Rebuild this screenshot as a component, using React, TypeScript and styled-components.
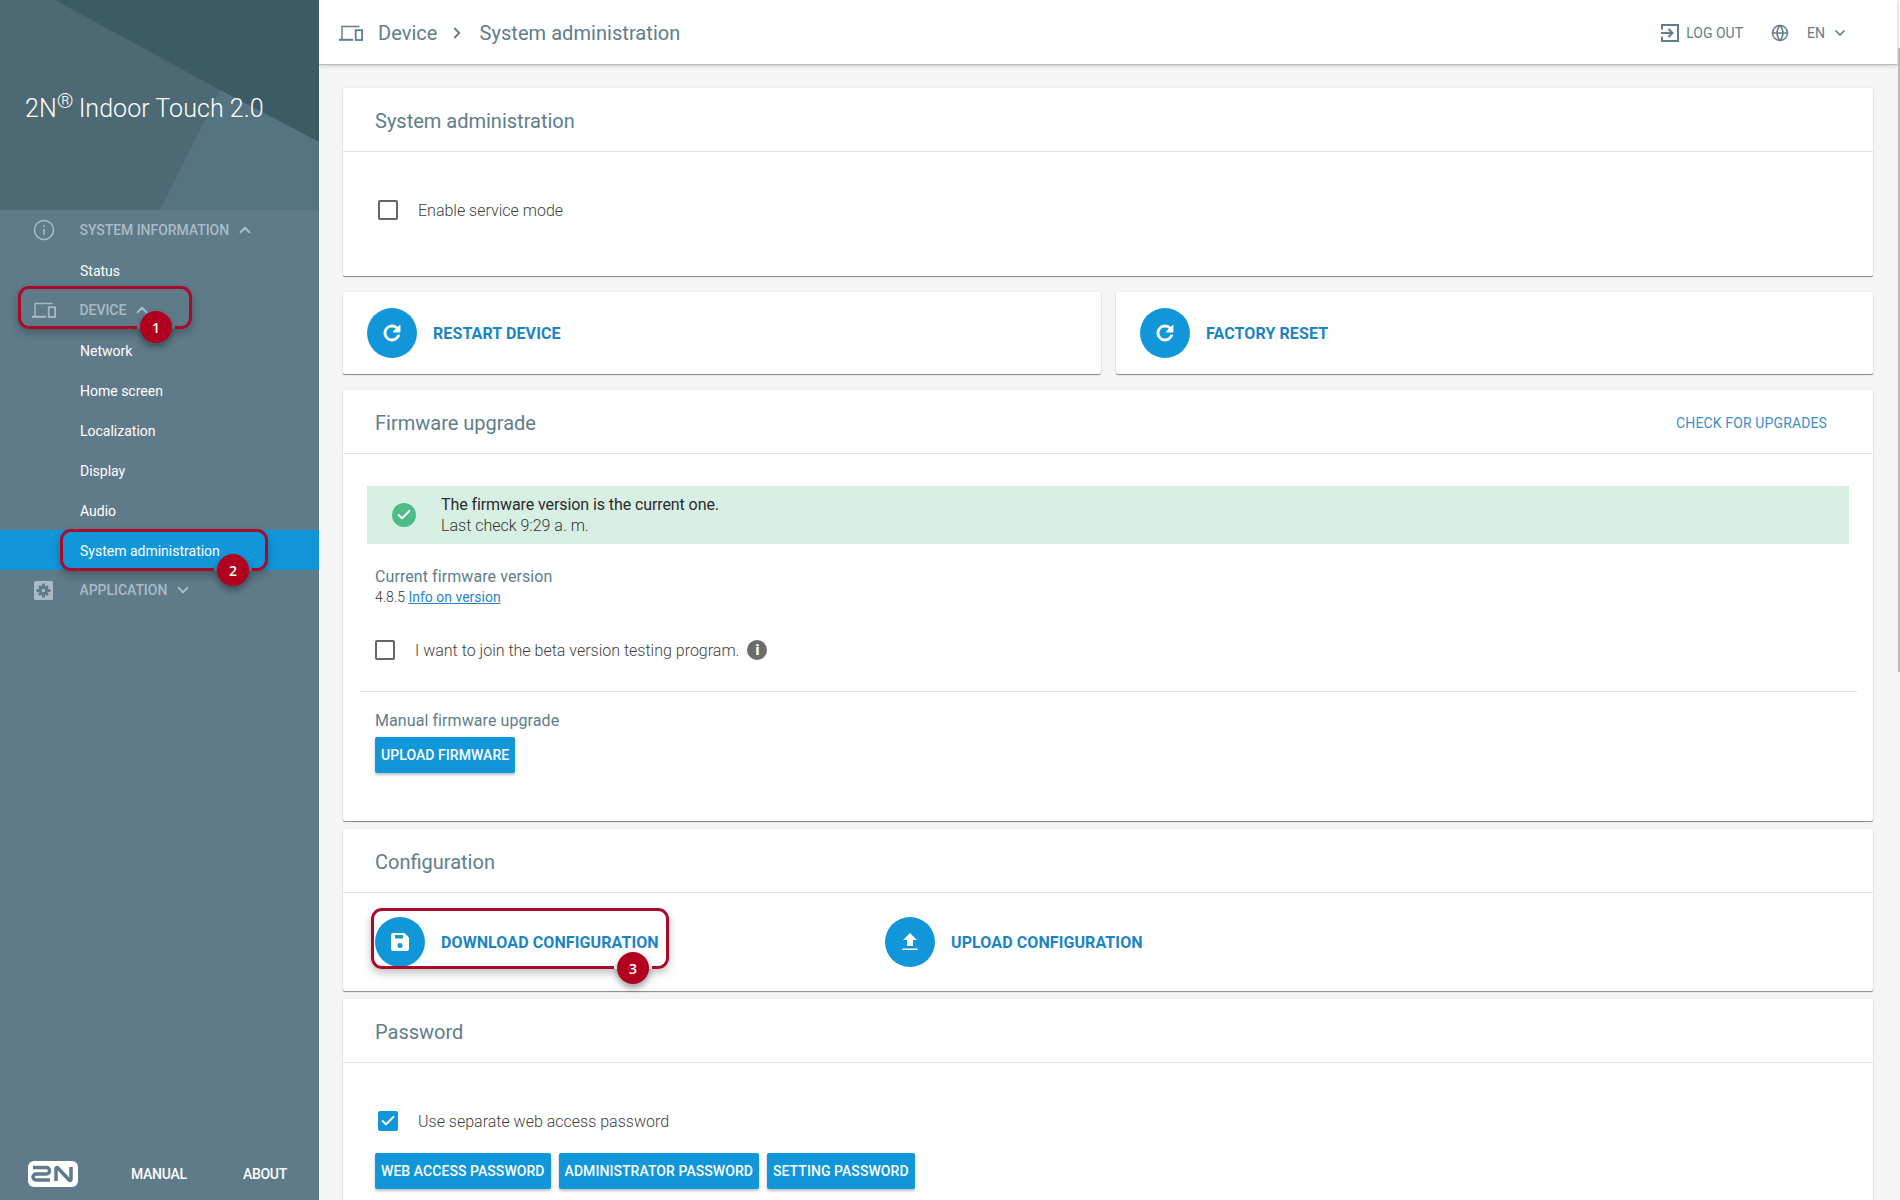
import React from "react";
import styled, { createGlobalStyle } from "styled-components";
import { Globe, ChevronUp, ChevronDown, ChevronRight, Check } from "lucide-react";

const Global = createGlobalStyle`
  html, body { margin: 0; padding: 0; background: #f5f5f5; }
  body { font-family: Roboto, "Liberation Sans", sans-serif; overflow: hidden; }
  * { box-sizing: border-box; }
`;

const Shell = styled.div`
  position: relative;
  display: flex;
  width: 1900px;
  height: 1200px;
  overflow: hidden;
  background: #f5f5f5;
`;

const Sidebar = styled.aside`
  width: 319px;
  flex: none;
  display: flex;
  flex-direction: column;
  background: #5f7a89;
`;

const Brand = styled.div`
  position: relative;
  height: 210px;
  flex: none;
  display: flex;
  align-items: flex-start;
  padding: 89px 0 0 25px;
  background: #4c6974;
  overflow: hidden;
`;

const BrandArt = styled.svg`
  position: absolute;
  inset: 0;
`;

const BrandTitle = styled.h1`
  position: relative;
  margin: 0;
  font-size: 25px;
  line-height: 40px;
  font-weight: 300;
  color: #fff;
  white-space: nowrap;
  letter-spacing: 0.05px;
  sup { font-size: 21px; line-height: 0; vertical-align: 9px; margin-right: 5px; }
`;

const Nav = styled.nav`
  display: flex;
  flex-direction: column;
`;

const Section = styled.div`
  height: 40px;
  display: flex;
  align-items: center;
  color: #a8bcc7;
  font-size: 14px;
  font-weight: 500;
  letter-spacing: -0.05px;
  text-transform: uppercase;
`;

const SectionIcon = styled.span`
  width: 79.5px;
  flex: none;
  display: flex;
  justify-content: center;
  padding-left: 8px;
`;

const SectionCaret = styled.span`
  display: flex;
  margin-left: 7px;
`;

const NavItem = styled.a<{ $active?: boolean }>`
  height: 40px;
  display: flex;
  align-items: center;
  padding: 1px 0 0 80px;
  font-size: 14px;
  font-weight: 400;
  color: #fff;
  background: ${(p) => (p.$active ? "#1296da" : "transparent")};
`;

const SideFooter = styled.div`
  margin-top: auto;
  height: 36px;
  margin-bottom: 8px;
  display: flex;
  align-items: center;
  padding-left: 28px;
`;

const FooterLink = styled.a<{ $w: number }>`
  width: ${(p) => p.$w}px;
  font-size: 14px;
  font-weight: 500;
  color: #fff;
  letter-spacing: -0.3px;
`;

const Logo = styled.svg`
  margin-right: 53px;
`;

const Main = styled.main`
  flex: 1;
  min-width: 0;
  display: flex;
  flex-direction: column;
`;

const TopBar = styled.header`
  height: 65px;
  flex: none;
  margin-right: 3px;
  display: flex;
  align-items: center;
  padding: 1px 49px 0 20px;
  background: #fff;
  border-bottom: 1px solid #bbb;
  box-shadow: 0 1px 3px rgba(0, 0, 0, 0.18);
  color: #607d8b;
`;

const Crumb = styled.span<{ $ml?: number }>`
  font-size: 20px;
  font-weight: 400;
  letter-spacing: 0.05px;
  color: #607d8b;
  margin-left: ${(p) => p.$ml ?? 0}px;
`;

const CrumbSep = styled.span`
  display: flex;
  margin: 0 14px 0 10px;
  color: #607d8b;
`;

const TopRight = styled.div`
  margin-left: auto;
  display: flex;
  align-items: center;
`;

const TopText = styled.span<{ $ml?: number }>`
  font-size: 14px;
  font-weight: 400;
  color: #607d8b;
  margin-left: ${(p) => p.$ml ?? 0}px;
`;

const GlobeIcon = styled(Globe)`
  margin-left: 28px;
`;

const EnCaret = styled(ChevronDown)`
  margin-left: 7px;
`;

const Content = styled.div`
  flex: 1;
  min-height: 0;
  padding: 23px 27px 0 24px;
  display: flex;
  flex-direction: column;
`;

const Card = styled.section<{ $after?: number }>`
  flex: none;
  background: #fff;
  border-radius: 2px;
  box-shadow: 0 1px 1px rgba(0, 0, 0, 0.45), 0 0 2px rgba(0, 0, 0, 0.08);
  margin-bottom: ${(p) => p.$after ?? 8}px;
`;

const CardHead = styled.div`
  height: 64px;
  display: flex;
  align-items: center;
  justify-content: space-between;
  padding: 2px 46px 0 32px;
  border-bottom: 1px solid #e3e3e3;
`;

const CardTitle = styled.h2`
  margin: 0;
  font-size: 20px;
  font-weight: 400;
  color: #607d8b;
`;

const HeadLink = styled.a`
  font-size: 14px;
  font-weight: 400;
  letter-spacing: 0.13px;
  color: #3d8fc9;
`;

const CheckRow = styled.label<{ $pad: number; $gap: number; $top: number; $bottom: number }>`
  display: flex;
  align-items: center;
  padding-left: ${(p) => p.$pad}px;
  gap: ${(p) => p.$gap}px;
  margin-top: ${(p) => p.$top}px;
  margin-bottom: ${(p) => p.$bottom}px;
  height: 20px;
`;

const Box = styled.span<{ $on?: boolean }>`
  width: 20px;
  height: 20px;
  flex: none;
  border-radius: 2px;
  display: flex;
  align-items: center;
  justify-content: center;
  border: 2px solid ${(p) => (p.$on ? "#1296da" : "#666")};
  background: ${(p) => (p.$on ? "#1296da" : "#fff")};
`;

const CheckText = styled.span`
  font-size: 16px;
  font-weight: 300;
  color: #3f3f3f;
`;

const ActionRow = styled.div`
  display: grid;
  grid-template-columns: 758px 757px;
  gap: 15px;
  margin-bottom: 16px;
`;

const ActionCard = styled.div`
  height: 82px;
  display: flex;
  align-items: center;
  padding-left: 24px;
  background: #fff;
  border-radius: 2px;
  box-shadow: 0 1px 1px rgba(0, 0, 0, 0.45), 0 0 2px rgba(0, 0, 0, 0.08);
`;

const Action = styled.a`
  display: flex;
  align-items: center;
  gap: 16px;
`;

const Round = styled.span`
  width: 50px;
  height: 50px;
  flex: none;
  border-radius: 50%;
  background: #1296da;
  display: flex;
  align-items: center;
  justify-content: center;
`;

const ActionText = styled.span`
  font-size: 16px;
  font-weight: 700;
  letter-spacing: 0.1px;
  color: #1b84c4;
`;

const Alert = styled.div`
  margin: 32px 24px 0;
  height: 58px;
  display: flex;
  align-items: center;
  background: #d7f0e3;
  padding-left: 25px;
  gap: 25px;
`;

const AlertIcon = styled.span`
  width: 24px;
  height: 24px;
  flex: none;
  border-radius: 50%;
  background: #4fbb87;
  display: flex;
  align-items: center;
  justify-content: center;
`;

const AlertLines = styled.div`
  display: flex;
  flex-direction: column;
  font-size: 16px;
  line-height: 21px;
`;

const AlertMain = styled.span`
  font-weight: 400;
  letter-spacing: -0.09px;
  color: #2b2b2b;
`;

const AlertSub = styled.span`
  font-weight: 300;
  color: #333;
`;

const Info = styled.div<{ $top: number }>`
  margin-top: ${(p) => p.$top}px;
  padding-left: 32px;
`;

const InfoLabel = styled.div`
  font-size: 16px;
  line-height: 22px;
  font-weight: 400;
  letter-spacing: 0.08px;
  color: #607d8b;
`;

const InfoValue = styled.div`
  font-size: 14px;
  line-height: 18px;
  font-weight: 300;
  color: #333;
  a { color: #2a84c9; font-weight: 400; text-decoration: underline; }
`;

const Hint = styled.span`
  width: 20px;
  height: 20px;
  flex: none;
  margin-left: -12px;
  border-radius: 50%;
  background: #6c6c6c;
  color: #fff;
  font-size: 14px;
  font-weight: 900;
  display: flex;
  align-items: center;
  justify-content: center;
`;

const Divider = styled.hr`
  margin: 31px 16px 0 17px;
  border: 0;
  border-top: 1px solid #e3e3e3;
`;

const Buttons = styled.div<{ $top?: number; $bottom: number }>`
  display: flex;
  gap: 8px;
  padding-left: 32px;
  margin-top: ${(p) => p.$top ?? 0}px;
  margin-bottom: ${(p) => p.$bottom}px;
`;

const Btn = styled.button`
  height: 36px;
  padding: 0 6px;
  border: 0;
  border-radius: 2px;
  background: #1296da;
  color: #fff;
  font-family: inherit;
  font-size: 14px;
  font-weight: 500;
  letter-spacing: 0.06px;
  box-shadow: 0 2px 3px rgba(0, 0, 0, 0.25);
  white-space: nowrap;
`;

const ConfigBody = styled.div`
  height: 98px;
  padding: 24px 0 0 32px;
  display: grid;
  grid-template-columns: 510px auto;
  align-content: start;
  justify-content: start;
`;

const Mark = styled.div<{ $x: number; $y: number; $w: number; $h: number; $gapX: number; $gapColor: string }>`
  position: absolute;
  left: ${(p) => p.$x}px;
  top: ${(p) => p.$y}px;
  width: ${(p) => p.$w}px;
  height: ${(p) => p.$h}px;
  border: 3px solid #a90a2c;
  border-radius: 11px;
  box-shadow: 0 4px 8px rgba(0, 0, 0, 0.25);
  &::after {
    content: "";
    position: absolute;
    left: ${(p) => p.$gapX - p.$x - 3 - 19}px;
    bottom: -3px;
    width: 38px;
    height: 3px;
    background: ${(p) => p.$gapColor};
  }
`;

const Badge = styled.span<{ $x: number; $y: number }>`
  position: absolute;
  left: ${(p) => p.$x - 16}px;
  top: ${(p) => p.$y - 16}px;
  width: 32px;
  height: 32px;
  border-radius: 50%;
  background: #b2011f;
  color: #fff;
  font-family: "Open Sans", sans-serif;
  font-size: 14px;
  font-weight: 600;
  display: flex;
  align-items: center;
  justify-content: center;
  box-shadow: 0 4px 7px rgba(0, 0, 0, 0.38);
`;

const Thumb = styled.div`
  position: absolute;
  right: 0;
  top: 48px;
  width: 2px;
  height: 624px;
  background: #b9b9b9;
`;

const DeviceIcon = ({ c, w = 24 }: { c: string; w?: number }) => (
  <svg width={w} height={(w * 16) / 24} viewBox="0 0 24 16" fill="none">
    <path d="M3 14V1.500h17.500" stroke={c} strokeWidth="1.4" />
    <path d="M0 14.800h14" stroke={c} strokeWidth="2" />
    <rect x="16.700" y="5.200" width="6.400" height="9.800" stroke={c} strokeWidth="1.800" />
  </svg>
);

const Restart = () => (
  <svg width="24" height="24" viewBox="0 0 24 24" fill="#fff" stroke="#fff" strokeWidth=".9">
    <path d="M17.65 6.35C16.2 4.9 14.21 4 12 4c-4.42 0-7.99 3.58-7.99 8s3.57 8 7.99 8c3.73 0 6.84-2.55 7.73-6h-2.08c-.82 2.33-3.04 4-5.65 4-3.31 0-6-2.69-6-6s2.69-6 6-6c1.66 0 3.14.69 4.22 1.78L13 11h7V4l-2.35 2.35z" />
  </svg>
);

const Save = () => (
  <svg width="24" height="24" viewBox="0 0 24 24">
    <path fill="#fff" d="M5 3h11.500L21 7.500V19a2 2 0 0 1-2 2H5a2 2 0 0 1-2-2V5a2 2 0 0 1 2-2z" />
    <rect x="7" y="5" width="8" height="3.500" fill="#1296da" />
    <circle cx="12" cy="15.500" r="2.500" fill="#1296da" />
  </svg>
);

const Upload = () => (
  <svg width="24" height="24" viewBox="0 0 24 24" fill="#fff">
    <path d="M9 16h6v-6h4l-7-7-7 7h4z" />
    <path d="M4.500 18.500h15V20h-15z" />
  </svg>
);

const LogOut = () => (
  <svg width="18" height="18" viewBox="0 0 18 18" fill="none" stroke="#607d8b" strokeWidth="2">
    <path d="M1 5.500V1h16v16H1v-4.500" />
    <path d="M0 9h11" />
    <path d="M7.500 5l4 4-4 4" />
  </svg>
);

const InfoOutline = () => (
  <svg width="22" height="22" viewBox="0 0 22 22" fill="none" stroke="#a8bcc7" strokeWidth="1.500">
    <circle cx="11" cy="11" r="9.500" />
    <path d="M11 10v6M11 6v2" />
  </svg>
);

const GearBox = () => (
  <svg width="19" height="19" viewBox="0 0 19 19">
    <rect width="19" height="19" rx="1.500" fill="#a8bcc7" />
    <g fill="#5f7a89">
      <circle cx="9.500" cy="9.500" r="4.500" />
      <path d="M8 2.500h3v14H8zM2.500 8h14v3h-14z" />
      <path d="M4 6l2-2 9 9-2 2zM13 4l2 2-9 9-2-2z" />
    </g>
    <circle cx="9.500" cy="9.500" r="1.800" fill="#a8bcc7" />
  </svg>
);

const LogoMark = () => (
  <Logo width="50" height="26" viewBox="0 0 50 26">
    <rect width="50" height="26" rx="6" fill="#fff" />
    <g fill="none" stroke="#5f7a89" strokeWidth="3.500">
      <path d="M5 6.500h13.500a3 3 0 0 1 3 3v.5a3 3 0 0 1-3 3H8a3 3 0 0 0-3 3v0a3 3 0 0 0 3 3h14" />
      <path d="M28 20V7.500a1 1 0 0 1 1.700-.7L41.300 19.200a1 1 0 0 0 1.700-.7V6" />
    </g>
  </Logo>
);

const SmallCheck = () => <Check size={16} color="#fff" strokeWidth={3} />;

export default function App() {
  return (
    <Shell>
      <Global />
      <Sidebar>
        <Brand>
          <BrandArt width="319" height="210" viewBox="0 0 319 210">
            <polygon points="55,0 319,0 319,142 220,90" fill="#3d5b65" />
            <polygon points="160,210 220,90 319,142 319,210" fill="#567381" />
          </BrandArt>
          <BrandTitle>
            2N<sup>®</sup>Indoor Touch 2.0
          </BrandTitle>
        </Brand>
        <Nav>
          <Section>
            <SectionIcon><InfoOutline /></SectionIcon>
            System information
            <SectionCaret><ChevronUp size={18} color="#a8bcc7" strokeWidth={2.6} /></SectionCaret>
          </Section>
          <NavItem>Status</NavItem>
          <Section>
            <SectionIcon><DeviceIcon c="#a8bcc7" /></SectionIcon>
            Device
            <SectionCaret><ChevronUp size={18} color="#a8bcc7" strokeWidth={2.6} /></SectionCaret>
          </Section>
          <NavItem>Network</NavItem>
          <NavItem>Home screen</NavItem>
          <NavItem>Localization</NavItem>
          <NavItem>Display</NavItem>
          <NavItem>Audio</NavItem>
          <NavItem $active>System administration</NavItem>
          <Section>
            <SectionIcon><GearBox /></SectionIcon>
            Application
            <SectionCaret><ChevronDown size={18} color="#a8bcc7" strokeWidth={2.6} /></SectionCaret>
          </Section>
        </Nav>
        <SideFooter>
          <LogoMark />
          <FooterLink $w={112}>MANUAL</FooterLink>
          <FooterLink $w={50}>ABOUT</FooterLink>
        </SideFooter>
      </Sidebar>

      <Main>
        <TopBar>
          <DeviceIcon c="#607d8b" />
          <Crumb $ml={15}>Device</Crumb>
          <CrumbSep><ChevronRight size={18} strokeWidth={2.4} /></CrumbSep>
          <Crumb>System administration</Crumb>
          <TopRight>
            <LogOut />
            <TopText $ml={7}>LOG OUT</TopText>
            <GlobeIcon size={18} color="#607d8b" strokeWidth={2} />
            <TopText $ml={18}>EN</TopText>
            <EnCaret size={16} color="#607d8b" strokeWidth={2.6} />
          </TopRight>
        </TopBar>

        <Content>
          <Card $after={16}>
            <CardHead><CardTitle>System administration</CardTitle></CardHead>
            <CheckRow $pad={35} $gap={20} $top={48} $bottom={56}>
              <Box />
              <CheckText>Enable service mode</CheckText>
            </CheckRow>
          </Card>

          <ActionRow>
            <ActionCard>
              <Action><Round><Restart /></Round><ActionText>RESTART DEVICE</ActionText></Action>
            </ActionCard>
            <ActionCard>
              <Action><Round><Restart /></Round><ActionText>FACTORY RESET</ActionText></Action>
            </ActionCard>
          </ActionRow>

          <Card>
            <CardHead>
              <CardTitle>Firmware upgrade</CardTitle>
              <HeadLink>CHECK FOR UPGRADES</HeadLink>
            </CardHead>
            <Alert>
              <AlertIcon><SmallCheck /></AlertIcon>
              <AlertLines>
                <AlertMain>The firmware version is the current one.</AlertMain>
                <AlertSub>Last check 9:29 a. m.</AlertSub>
              </AlertLines>
            </Alert>
            <Info $top={22}>
              <InfoLabel>Current firmware version</InfoLabel>
              <InfoValue>4.8.5 <a>Info on version</a></InfoValue>
            </Info>
            <CheckRow $pad={32} $gap={20} $top={34} $bottom={0}>
              <Box />
              <CheckText>I want to join the beta version testing program.</CheckText>
              <Hint>i</Hint>
            </CheckRow>
            <Divider />
            <Info $top={18}>
              <InfoLabel>Manual firmware upgrade</InfoLabel>
            </Info>
            <Buttons $top={5} $bottom={48}>
              <Btn>UPLOAD FIRMWARE</Btn>
            </Buttons>
          </Card>

          <Card>
            <CardHead><CardTitle>Configuration</CardTitle></CardHead>
            <ConfigBody>
              <Action><Round><Save /></Round><ActionText>DOWNLOAD CONFIGURATION</ActionText></Action>
              <Action><Round><Upload /></Round><ActionText>UPLOAD CONFIGURATION</ActionText></Action>
            </ConfigBody>
          </Card>

          <Card>
            <CardHead><CardTitle>Password</CardTitle></CardHead>
            <CheckRow $pad={35} $gap={20} $top={48} $bottom={22}>
              <Box $on><SmallCheck /></Box>
              <CheckText>Use separate web access password</CheckText>
            </CheckRow>
            <Buttons $bottom={60}>
              <Btn>WEB ACCESS PASSWORD</Btn>
              <Btn>ADMINISTRATOR PASSWORD</Btn>
              <Btn>SETTING PASSWORD</Btn>
            </Buttons>
          </Card>
        </Content>
      </Main>

      <Thumb />
      <Mark $x={18} $y={286} $w={174} $h={43} $gapX={156} $gapColor="#5f7a89" />
      <Badge $x={156} $y={327}>1</Badge>
      <Mark $x={60} $y={529} $w={208} $h={42} $gapX={233} $gapColor="#5f7a89" />
      <Badge $x={233} $y={570}>2</Badge>
      <Mark $x={371} $y={908} $w={298} $h={61} $gapX={633} $gapColor="#ffffff" />
      <Badge $x={633} $y={968}>3</Badge>
    </Shell>
  );
}
